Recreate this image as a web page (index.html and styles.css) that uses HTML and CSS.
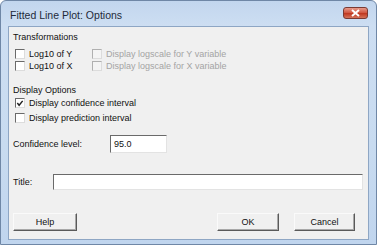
FILE: index.html
```html
<!DOCTYPE html>
<html>
<head>
<meta charset="utf-8">
<link rel="stylesheet" href="styles.css">
</head>
<body>
<div class="window">
  <div class="titlebar">
    <span class="title">Fitted Line Plot: Options</span>
    <span class="close"><svg width="11" height="8" viewBox="0 0 11 8"><path d="M2 1 L9 7 M9 1 L2 7" stroke="#fff" stroke-width="2" fill="none"/></svg></span>
  </div>
  <div class="client">
    <div class="group-label">Transformations</div>
    <div class="trans-grid">
      <label class="check"><span class="box"></span>Log10 of Y</label>
      <label class="check disabled"><span class="box"></span>Display logscale for Y variable</label>
      <label class="check"><span class="box"></span>Log10 of X</label>
      <label class="check disabled"><span class="box"></span>Display logscale for X variable</label>
    </div>
    <div class="group-label options-label">Display Options</div>
    <div class="options">
      <label class="check"><span class="box"><svg width="9" height="9" viewBox="0 0 9 9"><path d="M1.5 4 L3.5 6.5 L7.5 1.5" stroke="#222" stroke-width="1.6" fill="none"/></svg></span>Display confidence interval</label>
      <label class="check"><span class="box"></span>Display prediction interval</label>
    </div>
    <div class="field conf">
      <span class="field-label">Confidence level:</span>
      <span class="input conf-input">95.0</span>
    </div>
    <div class="field title-field">
      <span class="field-label title-label">Title:</span>
      <span class="input title-input"></span>
    </div>
    <div class="buttons">
      <span class="btn help">Help</span>
      <span class="spacer"></span>
      <span class="btn ok">OK</span>
      <span class="btn cancel">Cancel</span>
    </div>
  </div>
</div>
</body>
</html>
```
FILE: styles.css
```css
* { box-sizing: border-box; }
html, body { margin: 0; padding: 0; background: #fff; }
body { width: 377px; height: 245px; overflow: hidden; font-family: "Liberation Sans", Arial, sans-serif; font-size: 9px; color: #111; }
.window {
  width: 377px; height: 245px;
  border: 1px solid #6f87a6;
  border-radius: 6px 6px 0 0;
  background: linear-gradient(180deg, #c2d6ee 0px, #cddef2 25px, #c8dbf0 60%, #c0d5ee 100%);
  padding: 0 7px 4px 7px;
  display: flex; flex-direction: column;
}
.titlebar {
  height: 25px; display: flex; align-items: center;
  padding-left: 2px;
}
.title { font-size: 10.5px; color: #1e2a3a; flex: 1; margin-top: 3px; }
.close {
  width: 25px; height: 12px; margin-right: 1px; margin-top: -2px;
  background: linear-gradient(180deg, #e79a8a 0%, #d15a45 45%, #c03a22 55%, #d4735a 100%);
  border: 1px solid #7a3a33; border-radius: 3px;
  display: flex; align-items: center; justify-content: center;
}
.client {
  flex: 1;
  background: #f0f0f0;
  border: 1px solid #8ea6c4;
  padding: 4px 0 0 4px;
  display: flex; flex-direction: column;
}
.group-label { height: 12px; line-height: 12px; }
.trans-grid {
  display: grid; grid-template-columns: 77px auto; grid-auto-rows: 12px;
  margin-top: 5px; padding-left: 2px;
}
.check { display: flex; align-items: center; gap: 4px; height: 12px; white-space: nowrap; }
.box {
  width: 10px; height: 10px; background: #fff;
  border-top: 1px solid #6a6a6a; border-left: 1px solid #6a6a6a;
  border-right: 1px solid #dcdcdc; border-bottom: 1px solid #dcdcdc;
  display: flex; align-items: center; justify-content: center;
  flex: none;
}
.check.disabled { color: #a4a4a4; }
.check.disabled .box { background: #f4f4f4; border-top-color: #b0b0b0; border-left-color: #b0b0b0; }
.options-label { margin-top: 12px; }
.options { display: flex; flex-direction: column; gap: 3px; margin-top: 1px; padding-left: 2px; }
.field { display: flex; align-items: center; }
.conf { margin-top: 11px; height: 18px; }
.field-label { width: 97px; }
.title-label { width: 40px; }
.input {
  background: #fff; height: 18px; line-height: 16px; padding-left: 3px;
  border-top: 1px solid #6a6a6a; border-left: 1px solid #6a6a6a;
  border-right: 1px solid #e3e3e3; border-bottom: 1px solid #e3e3e3;
}
.conf-input { width: 57px; }
.title-field { margin-top: 21px; height: 16px; }
.title-input { width: 310px; height: 16px; }
.buttons { display: flex; margin-top: 23px; padding-right: 13px; }
.spacer { flex: 1; }
.btn {
  height: 18px; line-height: 16px; text-align: center;
  background: #f0f0f0;
  border-top: 1px solid #fafafa; border-left: 1px solid #fafafa;
  border-right: 1px solid #5a5a5a; border-bottom: 1px solid #5a5a5a;
  box-shadow: inset -1px -1px 0 #a8a8a8;
}
.help { width: 64px; }
.ok { width: 62px; margin-right: 15px; }
.cancel { width: 61px; }
```
